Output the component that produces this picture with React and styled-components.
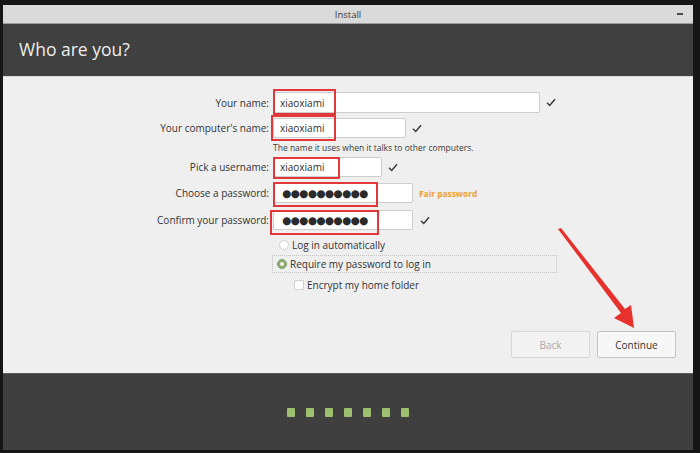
import React from "react";
import styled, { createGlobalStyle } from "styled-components";

const Global = createGlobalStyle`
  html, body { margin: 0; padding: 0; background: #1a1a1a; }
  body { font-family: "Open Sans", "Noto Sans", sans-serif; }
  * { box-sizing: border-box; }
`;

const Screen = styled.div`
  width: 700px;
  height: 453px;
  background: #161616;
  padding: 5px 7px 3px 3px;
`;

const Window = styled.div`
  width: 690px;
  height: 445px;
  display: flex;
  flex-direction: column;
  position: relative;
`;

const TitleBar = styled.div`
  height: 19px;
  background: #dadada;
  border-bottom: 1px solid #9e9e9e;
  display: grid;
  grid-template-columns: 1fr auto 1fr;
  align-items: center;
  font-size: 9.5px;
  color: #3a3a3a;
`;

const TitleText = styled.div`
  grid-column: 2;
`;

const Minimize = styled.div`
  justify-self: end;
  margin-right: 10px;
  width: 6px;
  height: 2px;
  background: #4a4a4a;
`;

const Header = styled.div`
  height: 53px;
  background: #404040;
  display: flex;
  align-items: center;
  padding-left: 16px;
  padding-bottom: 2px;
  color: #ededed;
  font-size: 17.5px;
  border-bottom: 1px solid #d8d8d8;
`;

const Content = styled.div`
  flex: 1;
  background: #efefef;
  display: flex;
  flex-direction: column;
  padding: 15px 17px 15px 0;
  position: relative;
`;

const Form = styled.div`
  display: flex;
  flex-direction: column;
`;

const Row = styled.div`
  display: grid;
  grid-template-columns: 266px 1fr;
  column-gap: 4px;
  align-items: center;
  height: ${(p) => p.$h || 20}px;
  margin-top: ${(p) => p.$mt || 0}px;
`;

const Label = styled.div`
  text-align: right;
  font-size: 10px;
  color: #333;
  white-space: nowrap;
`;

const Field = styled.div`
  display: flex;
  align-items: center;
  gap: ${(p) => p.$gap || 6}px;
`;

const InputWrap = styled.div`
  position: relative;
  width: ${(p) => p.$w}px;
  height: ${(p) => p.$h || 20}px;
  background: #fff;
  border: 1px solid #cdcdcd;
  border-radius: 2px;
  display: flex;
  align-items: center;
  padding-left: 6px;
  font-size: 10px;
  color: #2e2e2e;
`;

const Dots = styled.span`
  font-family: "DejaVu Sans", sans-serif;
  font-size: 10.5px;
  letter-spacing: -0.6px;
  color: #2a2a2a;
  padding-left: 2px;
`;

const Highlight = styled.div`
  position: absolute;
  left: ${(p) => p.$l}px;
  top: ${(p) => p.$t}px;
  width: ${(p) => p.$w}px;
  height: ${(p) => p.$h}px;
  border: 2px solid #e2383a;
  pointer-events: none;
`;

const Help = styled.div`
  grid-column: 2;
  font-size: 8.5px;
  color: #3a3a3a;
`;

const Fair = styled.span`
  font-size: 8.4px;
  font-weight: 700;
  color: #f0a030;
`;

const Option = styled.div`
  grid-column: 2;
  display: flex;
  align-items: center;
  gap: 3px;
  font-size: 10px;
  color: #333;
  height: 100%;
  padding-left: ${(p) => p.$pl || 5}px;
  border: ${(p) => (p.$focus ? "1px dotted #c2c2c2" : "1px solid transparent")};
  width: ${(p) => (p.$focus ? "285px" : "auto")};
  margin-left: ${(p) => (p.$focus ? "-1px" : "0")};
`;

const Radio = styled.span`
  width: 10px;
  height: 10px;
  border-radius: 50%;
  background: ${(p) => (p.$on ? "#8cae6c" : "#fff")};
  border: 1px solid ${(p) => (p.$on ? "#7f9f62" : "#d3d3d3")};
  display: inline-flex;
  align-items: center;
  justify-content: center;
  &::after {
    content: "";
    width: 4px;
    height: 4px;
    border-radius: 50%;
    background: ${(p) => (p.$on ? "#f4f4f4" : "transparent")};
  }
`;

const Checkbox = styled.span`
  width: 10px;
  height: 10px;
  background: #fff;
  border: 1px solid #d0d0d0;
  border-radius: 1px;
`;

const Buttons = styled.div`
  margin-top: auto;
  display: flex;
  justify-content: flex-end;
  gap: 7px;
`;

const Button = styled.div`
  width: 79px;
  height: 27px;
  border: 1px solid ${(p) => (p.$disabled ? "#d6d6d6" : "#c4c4c4")};
  border-radius: 2px;
  background: ${(p) => (p.$disabled ? "#f2f2f2" : "#f7f7f7")};
  color: ${(p) => (p.$disabled ? "#a8a8a8" : "#333")};
  font-size: 10px;
  display: flex;
  align-items: center;
  justify-content: center;
`;

const Arrow = styled.svg`
  position: absolute;
  left: 0;
  top: 0;
  pointer-events: none;
`;

const Footer = styled.div`
  height: 77px;
  background: #3f3f3f;
  border-top: 1px solid #5c5c5c;
  display: flex;
  align-items: center;
  justify-content: center;
  gap: 11px;
`;

const Step = styled.span`
  width: 8px;
  height: 9px;
  border-radius: 1px;
  background: #9cbf70;
`;

const Check = () => (
  <svg width="10" height="9" viewBox="0 0 10 9">
    <polyline points="1,4.8 3.7,7.5 9,1.2" fill="none" stroke="#3a3a3a" strokeWidth="1.5" />
  </svg>
);

const PW = "●●●●●●●●●●";

export default function App() {
  return (
    <>
      <Global />
      <Screen>
        <Window>
          <TitleBar>
            <TitleText>Install</TitleText>
            <Minimize />
          </TitleBar>
          <Header>Who are you?</Header>
          <Content>
            <Form>
              <Row $h={21}>
                <Label>Your name:</Label>
                <Field $gap={6}>
                  <InputWrap $w={267} $h={21}>
                    xiaoxiami
                    <Highlight $l={-1} $t={-4} $w={63} $h={26} />
                  </InputWrap>
                  <Check />
                </Field>
              </Row>
              <Row $mt={5}>
                <Label>Your computer's name:</Label>
                <Field>
                  <InputWrap $w={133}>
                    xiaoxiami
                    <Highlight $l={-3} $t={-4} $w={65} $h={26} />
                  </InputWrap>
                  <Check />
                </Field>
              </Row>
              <Row $h={19}>
                <Help>The name it uses when it talks to other computers.</Help>
              </Row>
              <Row>
                <Label>Pick a username:</Label>
                <Field>
                  <InputWrap $w={109}>
                    xiaoxiami
                    <Highlight $l={-1} $t={-1} $w={67} $h={22} />
                  </InputWrap>
                  <Check />
                </Field>
              </Row>
              <Row $mt={6}>
                <Label>Choose a password:</Label>
                <Field>
                  <InputWrap $w={140}>
                    <Dots>{PW}</Dots>
                    <Highlight $l={-1} $t={-2} $w={105} $h={25} />
                  </InputWrap>
                  <Fair>Fair password</Fair>
                </Field>
              </Row>
              <Row $mt={7}>
                <Label>Confirm your password:</Label>
                <Field $gap={7}>
                  <InputWrap $w={140}>
                    <Dots>{PW}</Dots>
                    <Highlight $l={-4} $t={-1} $w={109} $h={25} />
                  </InputWrap>
                  <Check />
                </Field>
              </Row>
              <Row $h={14} $mt={7}>
                <Option>
                  <Radio />
                  Log in automatically
                </Option>
              </Row>
              <Row $h={18} $mt={4}>
                <Option $focus $pl={4}>
                  <Radio $on />
                  Require my password to log in
                </Option>
              </Row>
              <Row $h={14} $mt={4}>
                <Option $pl={20}>
                  <Checkbox />
                  Encrypt my home folder
                </Option>
              </Row>
            </Form>
            <Buttons>
              <Button $disabled>Back</Button>
              <Button>Continue</Button>
            </Buttons>
            <Arrow width="690" height="296" viewBox="3 77 690 296">
              <polygon
                points="558,229 561,228 625,309 631,305 634,328 614,318 621,313"
                fill="#e8302c"
              />
            </Arrow>
          </Content>
          <Footer>
            {Array.from({ length: 7 }).map((_, i) => (
              <Step key={i} />
            ))}
          </Footer>
        </Window>
      </Screen>
    </>
  );
}
